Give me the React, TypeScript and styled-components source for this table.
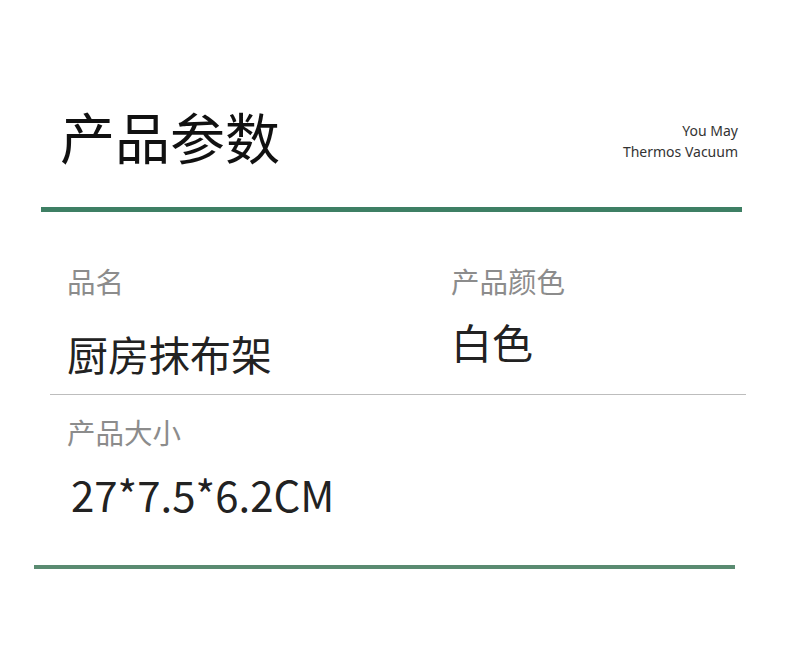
import React from "react";
import styled, { createGlobalStyle } from "styled-components";

const GlobalStyle = createGlobalStyle`
  html, body {
    margin: 0;
    padding: 0;
    background: #ffffff;
  }
  body {
    font-family: "Noto Sans CJK SC", "Noto Sans", sans-serif;
  }
`;

type Spec = {
  label: string;
  value: string;
  valueGap: number;
  latin?: boolean;
};

const rows: Spec[][] = [
  [
    { label: "品名", value: "厨房抹布架", valueGap: 38 },
    { label: "产品颜色", value: "白色", valueGap: 26 },
  ],
  [{ label: "产品大小", value: "27*7.5*6.2CM", valueGap: 27, latin: true }],
];

const App = () => {
  return (
    <Page>
      <GlobalStyle />
      <Header>
        <Title>产品参数</Title>
        <Tagline>
          <span>You May</span>
          <span>Thermos Vacuum</span>
        </Tagline>
      </Header>
      <Rule $left={41} $thick={5} $color="#3e7f64" />
      <SpecRow $top={55} $height={127}>
        {rows[0].map((item) => (
          <SpecCell key={item.label}>
            <Label>{item.label}</Label>
            <Value $gap={item.valueGap}>{item.value}</Value>
          </SpecCell>
        ))}
      </SpecRow>
      <Divider />
      <SpecRow $top={23} $height={147}>
        {rows[1].map((item) => (
          <SpecCell key={item.label}>
            <Label>{item.label}</Label>
            <Value $gap={item.valueGap} $latin={item.latin}>
              {item.value}
            </Value>
          </SpecCell>
        ))}
      </SpecRow>
      <Rule $left={34} $thick={4} $color="#5a8b71" />
    </Page>
  );
};

export default App;

const Page = styled.div`
  width: 790px;
  height: 648px;
  overflow: hidden;
  background: #fff;
`;

const Header = styled.div`
  display: flex;
  justify-content: space-between;
  align-items: flex-start;
  height: 99px;
  padding: 108px 52px 0 60px;
`;

const Title = styled.h1`
  margin: 0;
  font-size: 55px;
  line-height: 54px;
  font-weight: 400;
  color: #111;
`;

const Tagline = styled.div`
  display: flex;
  flex-direction: column;
  align-items: flex-end;
  margin-top: 12px;
  font-family: "Noto Sans", sans-serif;
  font-size: 14px;
  line-height: 21px;
  color: #333;
`;

const Rule = styled.div<{ $left: number; $thick: number; $color: string }>`
  margin-left: ${(p) => p.$left}px;
  width: 701px;
  height: ${(p) => p.$thick}px;
  background: ${(p) => p.$color};
`;

const SpecRow = styled.div<{ $top: number; $height: number }>`
  display: grid;
  grid-template-columns: 384px 1fr;
  padding: ${(p) => p.$top}px 0 0 67px;
  height: ${(p) => p.$height}px;
`;

const SpecCell = styled.div`
  display: flex;
  flex-direction: column;
  align-items: flex-start;
`;

const Label = styled.div`
  font-size: 28.5px;
  line-height: 28px;
  color: #8c8c8c;
`;

const Value = styled.div<{ $gap: number; $latin?: boolean }>`
  margin-top: ${(p) => p.$gap}px;
  font-size: ${(p) => (p.$latin ? 42 : 41)}px;
  line-height: 41px;
  color: #222;
  padding-left: ${(p) => (p.$latin ? 4 : 0)}px;
`;

const Divider = styled.div`
  margin-left: 50px;
  width: 696px;
  height: 1px;
  background: #bdbdbd;
`;
